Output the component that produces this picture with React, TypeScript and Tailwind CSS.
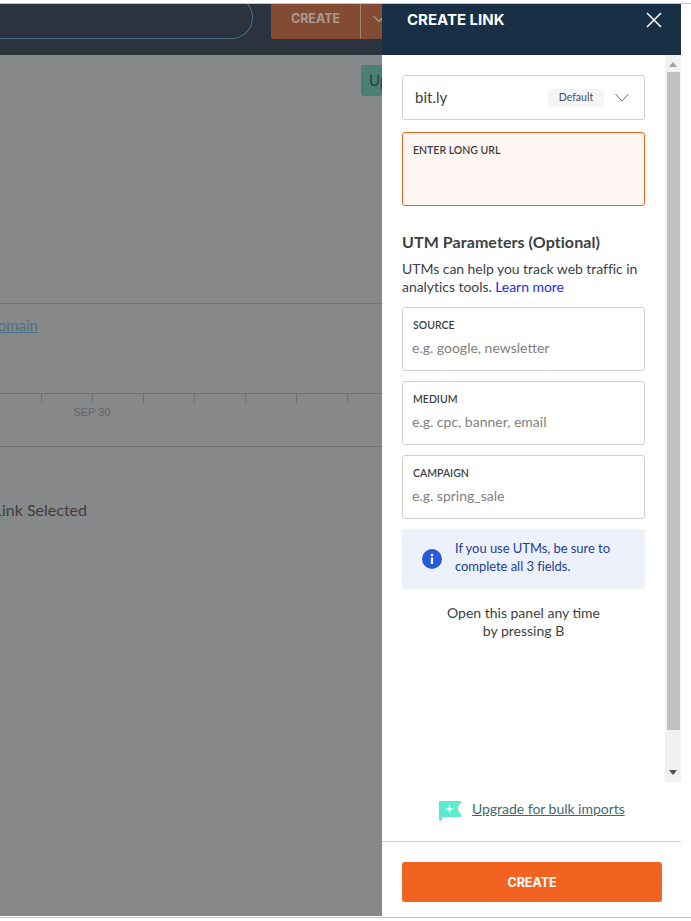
import { ChevronDown } from "lucide-react";

const UTM_FIELDS = [
  { label: "SOURCE", placeholder: "e.g. google, newsletter" },
  { label: "MEDIUM", placeholder: "e.g. cpc, banner, email" },
  { label: "CAMPAIGN", placeholder: "e.g. spring_sale" }
];

function DashboardBehind() {
  return (
    <div className="flex h-full w-[382px] shrink-0 flex-col overflow-hidden bg-[#87888a]">
      <header className="flex h-[51px] shrink-0 items-start justify-end bg-[#2b343e]">
        <div className="-mt-2 h-[43px] w-[253px] rounded-r-full border border-l-0 border-[#4a7189]" />
        <div className="ml-[18px] flex h-[35px] w-[111px] items-center overflow-hidden rounded-bl-[3px] bg-[#824b32]">
          <span className="flex h-full w-[90px] shrink-0 items-center justify-center border-r border-[#a08070] pb-1 text-[12.5px] font-bold text-[#a89a92] [font-family:Inter,sans-serif]">
            CREATE
          </span>
          <ChevronDown className="-mt-1.5 ml-2 size-5 shrink-0 text-[#a89a92]" strokeWidth={1.5} />
        </div>
      </header>

      <div className="flex justify-end pt-2.5">
        <div className="h-[31px] w-[21px] overflow-hidden rounded-l-[3px] bg-[#4a8074] pl-2 text-[15px] leading-[31px] whitespace-nowrap text-[#2b3a3e]">
          Upgrade
        </div>
      </div>

      <div className="mt-[207px] border-t border-[#717274]" />
      <div className="mt-[9px] flex h-6 w-[38px] justify-end overflow-hidden">
        <span className="shrink-0 text-[15px] leading-6 whitespace-nowrap text-[#4d7186] underline">Custom domain</span>
      </div>

      <div className="mt-[56px] border-t border-[#717274]" />
      <div className="flex h-[9px] pl-[41px]">
        {[0, 1, 2, 3, 4, 5, 6].map((tick) => (
          <div key={tick} className="h-[9px] w-[51px] shrink-0 border-l border-[#717274]" />
        ))}
      </div>
      <div className="mt-px w-[184px] text-center text-[11px] leading-4 text-[#636466] [font-family:'Liberation_Sans',sans-serif]">
        SEP 30
      </div>

      <div className="mt-[26px] border-t border-[#717274]" />
      <div className="mt-[53px] flex h-5 w-[87px] justify-end overflow-hidden">
        <span className="shrink-0 text-[16px] leading-5 whitespace-nowrap text-[#3d3e40]">1 Link Selected</span>
      </div>
    </div>
  );
}

function UtmField({ label, placeholder }: { label: string; placeholder: string }) {
  return (
    <label className="block h-16 rounded-[3px] border border-[#d0d0d0] bg-white pt-[11px] pl-[10px]">
      <span className="block text-[10.5px] leading-[13px] font-semibold text-[#3d3f43]">{label}</span>
      <input
        placeholder={placeholder}
        className="mt-[7px] -ml-px block w-[220px] text-[14px] leading-[18px] text-[#36393d] outline-none placeholder:text-[#808080]"
      />
    </label>
  );
}

function CreateLinkPanel() {
  return (
    <aside className="flex h-full w-[299px] shrink-0 flex-col bg-white">
      <div className="flex h-[51px] shrink-0 items-start justify-between bg-[#182f45] pt-2 pr-[19px] pl-[25px]">
        <h2 className="text-[15px] leading-[15px] font-bold text-white [font-family:Inter,sans-serif]">CREATE LINK</h2>
        <svg width="16" height="16" viewBox="0 0 16 16" fill="none" stroke="#fff" strokeWidth="1.5">
          <path d="M1 1l14 14M15 1L1 15" />
        </svg>
      </div>

      <div className="flex h-[727px] shrink-0">
        <div className="w-[283px] shrink-0 px-5 pt-5">
          <div className="flex h-[45px] w-[243px] items-center rounded-[3px] border border-[#d0d0d0] pr-[15px] pl-3 text-[15px] text-[#3d3f43]">
            <span className="-mt-px flex-1">bit.ly</span>
            <span className="mr-[11px] flex h-[18px] w-14 items-center justify-center rounded-[3px] bg-[#f4f5f7] text-[10.5px] text-[#4b4e52]">
              Default
            </span>
            <svg width="14" height="9" viewBox="0 0 14 9" fill="none" stroke="#5a5d61" strokeWidth="0.9">
              <path d="M0.5 1L7 8l6.5-7" />
            </svg>
          </div>

          <div className="mt-3 h-[74px] w-[243px] rounded-[3px] border border-[#f26322] bg-[#fef6f3] pt-[11px] pl-[10px] text-[10.5px] leading-[13px] font-semibold text-[#3d3f43]">
            ENTER LONG URL
          </div>

          <h3 className="mt-[26px] text-[16px] leading-5 font-bold tracking-[0.08px] text-[#3d3f43]">UTM Parameters (Optional)</h3>
          <p className="mt-[8px] w-[243px] text-[14px] leading-[18px] tracking-[-0.05px] text-[#3d3f43]">
            UTMs can help you track web traffic in analytics tools. <a className="text-[#2a2ae0]">Learn more</a>
          </p>

          <div className="mt-[11px] flex w-[243px] flex-col gap-2.5">
            {UTM_FIELDS.map((field) => (
              <UtmField key={field.label} label={field.label} placeholder={field.placeholder} />
            ))}
          </div>

          <div className="mt-2.5 flex h-[60px] w-[243px] items-center rounded-[3px] bg-[#edf1fc] pl-5 text-[13px] leading-[18px] tracking-[-0.05px] text-[#23408f]">
            <svg width="20" height="20" viewBox="0 0 20 20" className="shrink-0">
              <circle cx="10" cy="10" r="10" fill="#2a5bd7" />
              <circle cx="10" cy="6" r="1.3" fill="#fff" />
              <rect x="8.9" y="8.6" width="2.2" height="6.4" fill="#fff" />
            </svg>
            <p className="-mt-1 ml-[13px]">
              If you use UTMs, be sure to
              <br />
              complete all 3 fields.
            </p>
          </div>

          <p className="mt-[15px] w-[243px] text-center text-[14px] leading-[18px] text-[#3d3f43]">
            Open this panel any time
            <br />
            by pressing B
          </p>
        </div>

        <div className="flex w-4 flex-col items-center bg-[#f1f1f1]">
          <svg className="mt-[7px] shrink-0" width="8" height="5" viewBox="0 0 8 5">
            <path d="M4 0l4 5H0z" fill="#a3a3a3" />
          </svg>
          <div className="mt-[5px] h-[658px] w-[13px] shrink-0 bg-[#c0c0c0]" />
          <svg className="mt-[40px] shrink-0" width="8" height="5" viewBox="0 0 8 5">
            <path d="M4 5L8 0H0z" fill="#505050" />
          </svg>
        </div>
      </div>

      <div className="flex h-[59px] shrink-0 items-start pt-[19px] pl-[57px]">
        <svg width="22" height="20" viewBox="0 0 22 20" className="shrink-0">
          <path d="M0 0h22v2c-2 1-3 3-3 5s1 5 3 6v3H3v3l-2 1-1-1z" fill="#5eeace" />
          <path d="M10.5 3.5l1 3.5 3.5 1-3.5 1-1 3.5-1-3.5-3.5-1 3.5-1z" fill="#fff" />
        </svg>
        <a className="-mt-px ml-[11px] text-[14px] leading-[18px] tracking-[-0.03px] text-[#3f6b6f] underline">Upgrade for bulk imports</a>
      </div>

      <div className="border-t border-[#d0d0d0] pt-5 pl-5">
        <button className="h-10 w-[260px] rounded-[3px] bg-[#f26322] pt-0.5 text-[12.5px] font-bold text-white [font-family:Inter,sans-serif]">
          CREATE
        </button>
      </div>
    </aside>
  );
}

export default function App() {
  return (
    <div className="h-[921px] w-[691px] overflow-hidden bg-white pt-[3px] [font-family:Lato,'Liberation_Sans',sans-serif]">
      <div className="border-t border-[#c4c4c4]" />
      <div className="flex h-[912px] w-[691px]">
        <DashboardBehind />
        <CreateLinkPanel />
      </div>
      <div className="mt-px border-t border-[#c4c4c4]" />
    </div>
  );
}
